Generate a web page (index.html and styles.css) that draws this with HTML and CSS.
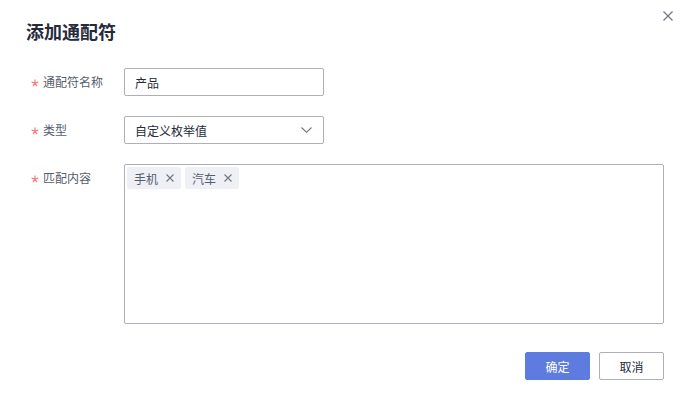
FILE: index.html
```html
<!DOCTYPE html>
<html lang="zh">
<head>
<meta charset="utf-8">
<title>添加通配符</title>
<link rel="stylesheet" href="styles.css">
</head>
<body>
<div class="dialog">
  <div class="header">
    <h1 class="title">添加通配符</h1>
    <button class="close" aria-label="关闭">
      <svg width="10" height="10" viewBox="0 0 10 10"><path d="M0.5 0.5L9.5 9.5M9.5 0.5L0.5 9.5" stroke="#71757f" stroke-width="1.2" fill="none"/></svg>
    </button>
  </div>
  <div class="form">
    <div class="row">
      <label class="label"><svg class="star" width="8" height="8" viewBox="0 0 8 8"><path d="M4 0.5V4.2M4 4.2L0.6 3.1M4 4.2L7.4 3.1M4 4.2L1.9 7.2M4 4.2L6.1 7.2" stroke="#f66f6a" stroke-width="1.1" fill="none"/></svg>通配符名称</label>
      <div class="input">产品</div>
    </div>
    <div class="row">
      <label class="label"><svg class="star" width="8" height="8" viewBox="0 0 8 8"><path d="M4 0.5V4.2M4 4.2L0.6 3.1M4 4.2L7.4 3.1M4 4.2L1.9 7.2M4 4.2L6.1 7.2" stroke="#f66f6a" stroke-width="1.1" fill="none"/></svg>类型</label>
      <div class="input select">
        <span>自定义枚举值</span>
        <svg width="11" height="6" viewBox="0 0 11 6"><path d="M0.5 0.5L5.5 5.3L10.5 0.5" stroke="#71757f" stroke-width="1.1" fill="none"/></svg>
      </div>
    </div>
    <div class="row row-top">
      <label class="label"><svg class="star" width="8" height="8" viewBox="0 0 8 8"><path d="M4 0.5V4.2M4 4.2L0.6 3.1M4 4.2L7.4 3.1M4 4.2L1.9 7.2M4 4.2L6.1 7.2" stroke="#f66f6a" stroke-width="1.1" fill="none"/></svg>匹配内容</label>
      <div class="textarea">
        <span class="tag">手机<svg width="8" height="8" viewBox="0 0 8 8"><path d="M0.5 0.5L7.5 7.5M7.5 0.5L0.5 7.5" stroke="#71757f" stroke-width="1.1" fill="none"/></svg></span>
        <span class="tag">汽车<svg width="8" height="8" viewBox="0 0 8 8"><path d="M0.5 0.5L7.5 7.5M7.5 0.5L0.5 7.5" stroke="#71757f" stroke-width="1.1" fill="none"/></svg></span>
      </div>
    </div>
  </div>
  <div class="footer">
    <button class="btn primary">确定</button>
    <button class="btn">取消</button>
  </div>
</div>
</body>
</html>
```

FILE: styles.css
```css
html, body {
  margin: 0;
  padding: 0;
  background: #ffffff;
}
body {
  font-family: "Noto Sans CJK SC", "Noto Sans", sans-serif;
  color: #252b3a;
  font-size: 12px;
}
.dialog {
  width: 687px;
  height: 405px;
  box-sizing: border-box;
  padding: 0 23px 0 24px;
  position: relative;
}
.header {
  padding-top: 19px;
  height: 68px;
  box-sizing: border-box;
}
.title {
  margin: 0 0 0 2px;
  font-size: 18px;
  line-height: 24px;
  font-weight: 700;
  color: #252b3a;
}
.close {
  position: absolute;
  top: 11px;
  right: 14px;
  width: 10px;
  height: 10px;
  padding: 0;
  border: 0;
  background: none;
  display: flex;
}
.form {
  display: flex;
  flex-direction: column;
  gap: 20px;
}
.row {
  display: grid;
  grid-template-columns: 100px 1fr;
  align-items: center;
}
.row-top {
  align-items: start;
}
.row-top .label {
  padding-top: 6px;
}
.label {
  display: flex;
  align-items: center;
  gap: 4px;
  color: #575d6c;
  font-size: 12px;
  line-height: 16px;
  padding-left: 7px;
}
.star {
  display: block;
  flex: none;
  margin-top: 1px;
}
.input {
  width: 200px;
  height: 28px;
  box-sizing: border-box;
  border: 1px solid #adb0b8;
  border-radius: 2px;
  padding: 0 10px;
  display: flex;
  align-items: center;
  font-size: 12px;
  color: #252b3a;
}
.select {
  justify-content: space-between;
  padding-right: 11px;
}
.textarea {
  height: 160px;
  box-sizing: border-box;
  border: 1px solid #adb0b8;
  border-radius: 2px;
  padding: 2px;
  display: flex;
  align-items: flex-start;
  align-content: flex-start;
  gap: 4px;
}
.tag {
  display: inline-flex;
  align-items: center;
  height: 22px;
  box-sizing: border-box;
  padding: 0 7px;
  gap: 8px;
  background: #eef0f5;
  border-radius: 2px;
  font-size: 12px;
  color: #575d6c;
}
.footer {
  display: flex;
  justify-content: flex-end;
  gap: 9px;
  margin-top: 28px;
}
.btn {
  width: 65px;
  height: 28px;
  border: 1px solid #adb0b8;
  border-radius: 2px;
  background: #ffffff;
  font-family: "Noto Sans CJK SC", "Noto Sans", sans-serif;
  font-size: 12px;
  color: #252b3a;
  padding: 0;
}
.btn.primary {
  background: #5e7ce0;
  border-color: #5e7ce0;
  color: #ffffff;
}
```
